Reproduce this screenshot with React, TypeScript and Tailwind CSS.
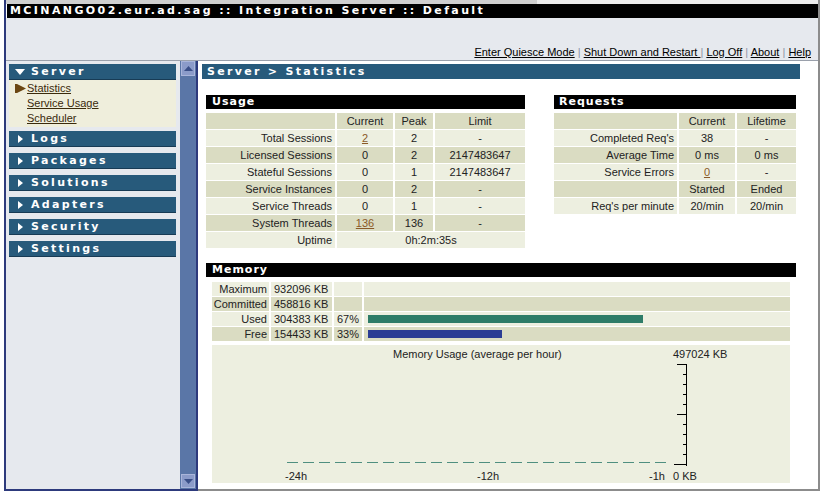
import React from "react";

const L = "bg-[#edefe0]";
const D = "bg-[#dadcc2]";
const HEAD = "font-['DejaVu_Sans',Verdana,sans-serif] font-bold text-white";

function TriDown() {
  return (
    <svg width="10" height="6" viewBox="0 0 10 6">
      <path d="M0 0H10L5 6Z" fill="#fff" />
    </svg>
  );
}
function TriRight() {
  return (
    <svg width="5" height="8" viewBox="0 0 5 8">
      <path d="M0 0L5 4L0 8Z" fill="#fff" />
    </svg>
  );
}

function NavBar({ label, open }: { label: string; open?: boolean }) {
  return (
    <div className="h-[16px] bg-[#275a7b] border-b border-[#173b55] flex items-center">
      <div className={open ? "w-[22px] pl-[6px] flex items-center" : "w-[22px] pl-[9px] flex items-center"}>
        {open ? <TriDown /> : <TriRight />}
      </div>
      <span className={HEAD + " text-[11px] tracking-[2.3px] leading-[15px]"}>{label}</span>
    </div>
  );
}

function A({ children }: { children: React.ReactNode }) {
  return <span className="underline text-[#8a5a28]">{children}</span>;
}

type Cell = React.ReactNode;

function Row({ cells, bg }: { cells: Cell[]; bg: string }) {
  return (
    <>
      {cells.map((c, i) => (
        <div
          key={i}
          className={
            bg +
            " h-[16px] leading-[16px] whitespace-nowrap " +
            (i === 0 ? "text-right pr-[3px]" : "text-center")
          }
        >
          {c}
        </div>
      ))}
    </>
  );
}

function SectionBar({ label, w, pl }: { label: string; w: string; pl: string }) {
  return (
    <div className={"h-[14px] bg-black " + w + " " + pl}>
      <span className={HEAD + " text-[11px] tracking-[1px] leading-[14px] block"}>{label}</span>
    </div>
  );
}

function MemRow({
  bg,
  label,
  value,
  pct,
  bar,
}: {
  bg: string;
  label: string;
  value: string;
  pct: string;
  bar?: React.ReactNode;
}) {
  return (
    <>
      <div className={bg + " h-[14px] leading-[14px] text-right pr-[2px]"}>{label}</div>
      <div className={bg + " h-[14px] leading-[14px] pl-[3px] whitespace-nowrap"}>{value}</div>
      <div className={bg + " h-[14px] leading-[14px] pl-[3px]"}>{pct}</div>
      <div className={bg + " h-[14px] flex items-center pl-[4px]"}>{bar}</div>
    </>
  );
}

function Chart() {
  const ticks = [];
  for (let i = 0; i <= 10; i++) {
    const y = 19 + i * 10 + 0.5;
    const x1 = i === 10 ? 462 : i === 0 || i === 5 ? 465 : 471;
    ticks.push(<line key={"t" + i} x1={x1} y1={y} x2={475} y2={y} stroke="#000" strokeWidth="1" />);
  }
  const dashes = [];
  for (let i = 0; i < 24; i++) {
    dashes.push(<rect key={"d" + i} x={75 + i * 16} y={117} width={11} height={1} fill="#4f8f80" />);
  }
  return (
    <div className={"relative w-[578px] h-[138px] mt-[4px] ml-[14px] " + L}>
      <svg className="absolute left-0 top-0" width="578" height="138" viewBox="0 0 578 138">
        <line x1="474.5" y1="19" x2="474.5" y2="121" stroke="#000" strokeWidth="1" />
        {ticks}
        {dashes}
      </svg>
      <span className="absolute left-[181px] top-[2px] leading-[14px] whitespace-nowrap">
        Memory Usage (average per hour)
      </span>
      <span className="absolute left-[461px] top-[2px] leading-[14px] whitespace-nowrap">497024 KB</span>
      <span className="absolute left-[73px] top-[124px] leading-[14px]">-24h</span>
      <span className="absolute left-[265px] top-[124px] leading-[14px]">-12h</span>
      <span className="absolute left-[437px] top-[124px] leading-[14px]">-1h</span>
      <span className="absolute left-[461px] top-[124px] leading-[14px] whitespace-nowrap">0 KB</span>
    </div>
  );
}

export default function App() {
  return (
    <div className="w-[831px] h-[499px] bg-white font-['Liberation_Sans',Arial,sans-serif] text-[11px] text-[#222] overflow-hidden">
      <div className="ml-[4px] w-[816px] h-[491px] border-l-2 border-l-[#2d3a7c] border-r-2 border-r-[#8c8c8c] flex flex-col">
        {/* top strip */}
        <div className="h-[4px] flex">
          <div className="w-[531px] bg-[#cfcfcf]" />
          <div className="flex-1 bg-[#ececec]" />
        </div>
        {/* title bar */}
        <div className="h-[14px] bg-black ml-[1px] pl-[3px]">
          <span className={HEAD + " text-[11px] tracking-[2.4px] leading-[14px] block whitespace-nowrap"}>
            MCINANGO02.eur.ad.sag :: Integration Server :: Default
          </span>
        </div>
        {/* header */}
        <div className="h-[43px] bg-[#e6e9ee] border-b border-[#9aa0ab] flex items-end justify-end pr-[7px] pb-[1px]">
          <div className="leading-[14px] text-black whitespace-nowrap">
            <span className="underline">Enter Quiesce Mode</span>
            <span className="text-[#8d93a6]"> | </span>
            <span className="underline">Shut Down and Restart </span>
            <span className="text-[#8d93a6]">| </span>
            <span className="underline">Log Off</span>
            <span className="text-[#8d93a6]"> | </span>
            <span className="underline">About</span>
            <span className="text-[#8d93a6]"> | </span>
            <span className="underline">Help</span>
          </div>
        </div>
        {/* body */}
        <div className="flex-1 flex">
          {/* nav frame */}
          <div className="w-[192px] flex bg-[#e6e9ee] border-b-2 border-[#2d3a7c]">
            <div className="w-[174px] pl-[3px] pr-[4px] pt-[3px] flex flex-col">
              <NavBar label="Server" open />
              <div className="bg-[#efeedc] flex flex-col py-[1px] leading-[15px] text-[#3a2a0c]">
                <div className="flex items-center">
                  <div className="w-[18px] pl-[6px] flex items-center">
                    <svg width="11" height="9" viewBox="0 0 11 9">
                      <rect x="0" y="0" width="2" height="9" fill="#6b4612" />
                      <path d="M2 0L11 4.5L2 9Z" fill="#6b4612" />
                    </svg>
                  </div>
                  <span className="underline">Statistics</span>
                </div>
                <div className="pl-[18px]">
                  <span className="underline">Service Usage</span>
                </div>
                <div className="pl-[18px]">
                  <span className="underline">Scheduler</span>
                </div>
              </div>
              <div className="flex flex-col gap-[6px] mt-[4px]">
                <NavBar label="Logs" />
                <NavBar label="Packages" />
                <NavBar label="Solutions" />
                <NavBar label="Adapters" />
                <NavBar label="Security" />
                <NavBar label="Settings" />
              </div>
            </div>
            {/* scrollbar */}
            <div className="w-[18px] bg-[#5a76a7] border-r-2 border-[#2d3a7c] flex flex-col justify-between">
              <div className="h-[15px] mx-[1px] bg-[#8b9bc9] border border-[#a9b5da] flex items-center justify-center">
                <svg width="9" height="5" viewBox="0 0 9 5">
                  <path d="M0 5L4.5 0L9 5Z" fill="#3a4f88" />
                </svg>
              </div>
              <div className="h-[14px] mx-[1px] mb-[1px] bg-[#8b9bc9] border border-[#a9b5da] flex items-center justify-center">
                <svg width="9" height="5" viewBox="0 0 9 5">
                  <path d="M0 0L4.5 5L9 0Z" fill="#3a4f88" />
                </svg>
              </div>
            </div>
          </div>
          {/* content frame */}
          <div className="flex-1 bg-white border-b-2 border-[#8c8c8c] flex flex-col">
            <div className="ml-[4px] mt-[3px] w-[598px] h-[15px] bg-[#275a7b] pl-[5px]">
              <span className={HEAD + " text-[11px] tracking-[2.3px] leading-[15px] block whitespace-nowrap"}>
                Server &gt; Statistics
              </span>
            </div>
            <div className="flex mt-[16px] ml-[8px] gap-[29px] items-start">
              {/* Usage */}
              <div className="flex flex-col">
                <SectionBar label="Usage" w="w-[319px]" pl="pl-[6px]" />
                <div className="mt-[4px] grid grid-cols-[129px_56px_38px_90px] gap-x-[2px] gap-y-[1px]">
                  <Row bg={D} cells={["", "Current", "Peak", "Limit"]} />
                  <Row bg={L} cells={["Total Sessions", <A>2</A>, "2", "-"]} />
                  <Row bg={D} cells={["Licensed Sessions", "0", "2", "2147483647"]} />
                  <Row bg={L} cells={["Stateful Sessions", "0", "1", "2147483647"]} />
                  <Row bg={D} cells={["Service Instances", "0", "2", "-"]} />
                  <Row bg={L} cells={["Service Threads", "0", "1", "-"]} />
                  <Row bg={D} cells={["System Threads", <A>136</A>, "136", "-"]} />
                  <div className={L + " h-[16px] leading-[16px] text-right pr-[3px]"}>Uptime</div>
                  <div className={L + " h-[16px] leading-[16px] text-center col-span-3"}>0h:2m:35s</div>
                </div>
              </div>
              {/* Requests */}
              <div className="flex flex-col">
                <SectionBar label="Requests" w="w-[242px]" pl="pl-[5px]" />
                <div className="mt-[4px] grid grid-cols-[123px_56px_59px] gap-x-[2px] gap-y-[1px]">
                  <Row bg={D} cells={["", "Current", "Lifetime"]} />
                  <Row bg={L} cells={["Completed Req's", "38", "-"]} />
                  <Row bg={D} cells={["Average Time", "0 ms", "0 ms"]} />
                  <Row bg={L} cells={["Service Errors", <A>0</A>, "-"]} />
                  <Row bg={D} cells={["", "Started", "Ended"]} />
                  <Row bg={L} cells={["Req's per minute", "20/min", "20/min"]} />
                </div>
              </div>
            </div>
            {/* Memory */}
            <div className="mt-[15px] ml-[8px]">
              <SectionBar label="Memory" w="w-[590px]" pl="pl-[6px]" />
            </div>
            <div className="mt-[5px] ml-[14px] w-[578px] grid grid-cols-[57px_61px_28px_426px] gap-x-[2px] gap-y-[1px]">
              <MemRow bg={L} label="Maximum" value="932096 KB" pct="" />
              <MemRow bg={D} label="Committed" value="458816 KB" pct="" />
              <MemRow
                bg={L}
                label="Used"
                value="304383 KB"
                pct="67%"
                bar={<div className="h-[8px] w-[275px] bg-[#2e7c68]" />}
              />
              <MemRow
                bg={D}
                label="Free"
                value="154433 KB"
                pct="33%"
                bar={<div className="h-[8px] w-[134px] bg-[#2b3d94]" />}
              />
            </div>
            <Chart />
          </div>
        </div>
      </div>
    </div>
  );
}
